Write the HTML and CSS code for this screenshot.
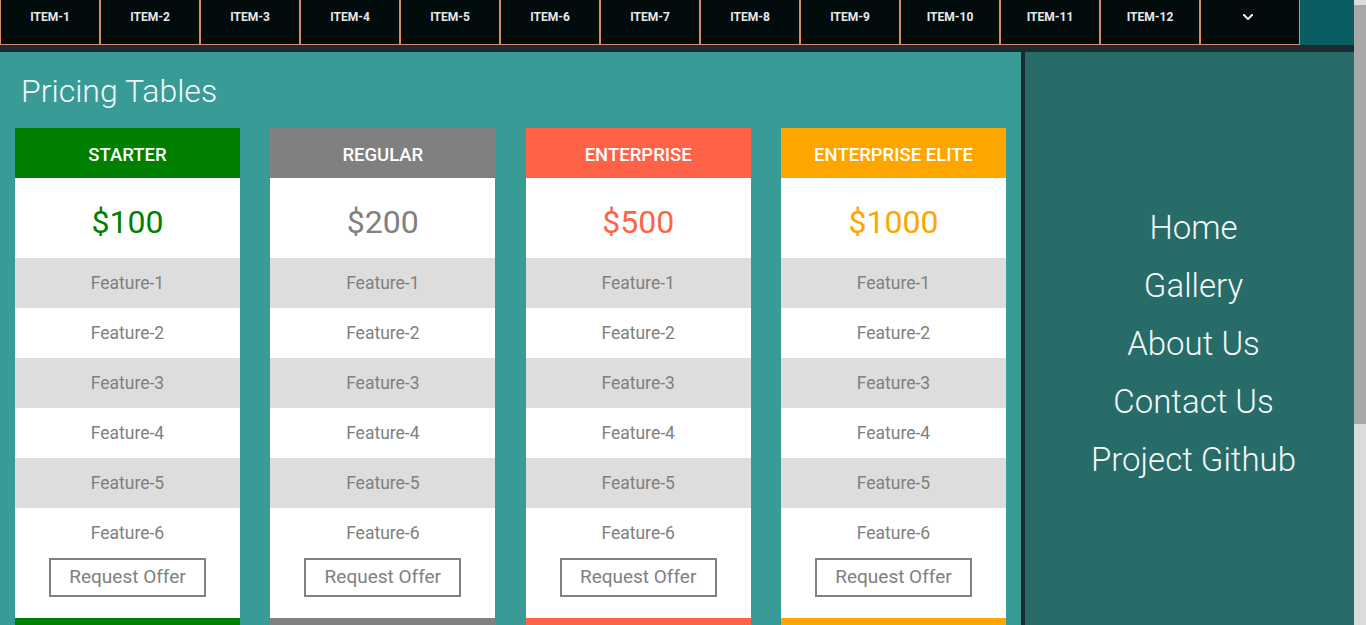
FILE: index.html
```html
<!DOCTYPE html>
<html lang="en">
<head>
<meta charset="utf-8">
<title>Pricing Tables</title>
<link rel="stylesheet" href="styles.css">
</head>
<body>
<div class="page">
<nav class="topnav">
  <a class="nav-item">ITEM-1</a>
  <a class="nav-item">ITEM-2</a>
  <a class="nav-item">ITEM-3</a>
  <a class="nav-item">ITEM-4</a>
  <a class="nav-item">ITEM-5</a>
  <a class="nav-item">ITEM-6</a>
  <a class="nav-item">ITEM-7</a>
  <a class="nav-item">ITEM-8</a>
  <a class="nav-item">ITEM-9</a>
  <a class="nav-item">ITEM-10</a>
  <a class="nav-item">ITEM-11</a>
  <a class="nav-item">ITEM-12</a>
  <a class="nav-item nav-more"><svg class="chev" viewBox="0 0 448 512" width="12" height="12"><path fill="#fff" d="M207.029 381.476L12.686 187.132c-9.373-9.373-9.373-24.569 0-33.941l22.667-22.667c9.357-9.357 24.522-9.375 33.901-.04L224 284.505l154.745-154.021c9.379-9.335 24.544-9.317 33.901.04l22.667 22.667c9.373 9.373 9.373 24.569 0 33.941L240.971 381.476c-9.373 9.372-24.569 9.372-33.942 0z"/></svg></a>
</nav>
<main class="layout">
  <section class="pricing">
    <h1 class="title">Pricing Tables</h1>
    <div class="cards">
      <div class="card c-green">
        <div class="card-head">STARTER</div>
        <div class="card-price">$100</div>
        <div class="feat">Feature-1</div>
        <div class="feat">Feature-2</div>
        <div class="feat">Feature-3</div>
        <div class="feat">Feature-4</div>
        <div class="feat">Feature-5</div>
        <div class="feat">Feature-6</div>
        <div class="card-action"><button class="btn">Request Offer</button></div>
        <div class="card-foot"></div>
      </div>
      <div class="card c-gray">
        <div class="card-head">REGULAR</div>
        <div class="card-price">$200</div>
        <div class="feat">Feature-1</div>
        <div class="feat">Feature-2</div>
        <div class="feat">Feature-3</div>
        <div class="feat">Feature-4</div>
        <div class="feat">Feature-5</div>
        <div class="feat">Feature-6</div>
        <div class="card-action"><button class="btn">Request Offer</button></div>
        <div class="card-foot"></div>
      </div>
      <div class="card c-tomato">
        <div class="card-head">ENTERPRISE</div>
        <div class="card-price">$500</div>
        <div class="feat">Feature-1</div>
        <div class="feat">Feature-2</div>
        <div class="feat">Feature-3</div>
        <div class="feat">Feature-4</div>
        <div class="feat">Feature-5</div>
        <div class="feat">Feature-6</div>
        <div class="card-action"><button class="btn">Request Offer</button></div>
        <div class="card-foot"></div>
      </div>
      <div class="card c-orange">
        <div class="card-head">ENTERPRISE ELITE</div>
        <div class="card-price">$1000</div>
        <div class="feat">Feature-1</div>
        <div class="feat">Feature-2</div>
        <div class="feat">Feature-3</div>
        <div class="feat">Feature-4</div>
        <div class="feat">Feature-5</div>
        <div class="feat">Feature-6</div>
        <div class="card-action"><button class="btn">Request Offer</button></div>
        <div class="card-foot"></div>
      </div>
    </div>
  </section>
  <aside class="side">
    <a class="side-link">Home</a>
    <a class="side-link">Gallery</a>
    <a class="side-link">About Us</a>
    <a class="side-link">Contact Us</a>
    <a class="side-link">Project Github</a>
  </aside>
</main>
</div>
<div class="scrollbar"><div class="scroll-thumb"></div></div>
</body>
</html>
```
FILE: styles.css
```css
html {
  background: #1b2b30;
}
body {
  margin: 0;
  font-family: Roboto, "Liberation Sans", sans-serif;
  background: #1b2b30;
  overflow: hidden;
}
.page {
  width: 1354px;
}
.scrollbar {
  position: fixed;
  top: 0;
  right: 0;
  width: 12px;
  height: 100%;
  background: #dcdcdc;
}
.scroll-thumb {
  margin-top: 5px;
  height: 419px;
  background: #a8a8a8;
}
.topnav {
  display: flex;
  height: 45px;
  background: #0a5e62;
}
.nav-item {
  box-sizing: border-box;
  width: 100px;
  height: 45px;
  display: flex;
  align-items: flex-start;
  justify-content: center;
  padding-top: 10px;
  background: #030c0c;
  border-left: 1px solid #d68b70;
  border-right: 1px solid #d68b70;
  border-bottom: 1px solid #d68b70;
  color: #e8eaea;
  font-size: 12px;
  font-weight: 700;
  line-height: 14px;
}
.nav-more {
  padding: 11px 4px 0 0;
}
.chev {
  display: block;
}
.layout {
  margin-top: 7px;
  display: flex;
  height: 880px;
}
.pricing {
  width: 1021px;
  box-sizing: border-box;
  padding: 0 15px;
  background: #389b96;
}
.title {
  margin: 0;
  padding: 19px 0 0 6px;
  height: 57px;
  font-size: 32px;
  font-weight: 300;
  line-height: 40px;
  color: #f4f8f8;
}
.cards {
  display: flex;
  justify-content: space-between;
}
.card {
  width: 225px;
  background: #fff;
  display: flex;
  flex-direction: column;
}
.card-head {
  box-sizing: border-box;
  height: 50px;
  padding-top: 3px;
  display: flex;
  align-items: center;
  justify-content: center;
  color: #fff;
  font-size: 18.5px;
  font-weight: 500;
}
.card-price {
  box-sizing: border-box;
  height: 80px;
  padding-top: 8px;
  display: flex;
  align-items: center;
  justify-content: center;
  font-size: 32px;
  font-weight: 400;
}
.feat {
  height: 50px;
  display: flex;
  align-items: center;
  justify-content: center;
  color: #808080;
  font-size: 17.5px;
}
.feat:nth-of-type(odd) {
  background: #dddddd;
}
.card-action {
  height: 60px;
  display: flex;
  justify-content: center;
  align-items: flex-start;
}
.btn {
  width: 157px;
  height: 39px;
  box-sizing: border-box;
  background: #fff;
  border: 2px solid #808080;
  color: #808080;
  font-family: Roboto, "Liberation Sans", sans-serif;
  font-size: 19px;
  padding: 0 0 2px;
}
.card-foot {
  height: 50px;
}
.c-green .card-head, .c-green .card-foot { background: #008000; }
.c-green .card-price { color: #008000; }
.c-gray .card-head, .c-gray .card-foot { background: #808080; }
.c-gray .card-price { color: #808080; }
.c-tomato .card-head, .c-tomato .card-foot { background: #ff6347; }
.c-tomato .card-price { color: #ff6347; }
.c-orange .card-head, .c-orange .card-foot { background: #ffa500; }
.c-orange .card-price { color: #ffa500; }
.side {
  flex: 1;
  margin-left: 4px;
  background: #276c68;
  display: flex;
  flex-direction: column;
  align-items: center;
  padding: 147px 0 0 8px;
}
.side-link {
  font-size: 33px;
  font-weight: 300;
  line-height: 58px;
  color: #f4f8f8;
}
```
